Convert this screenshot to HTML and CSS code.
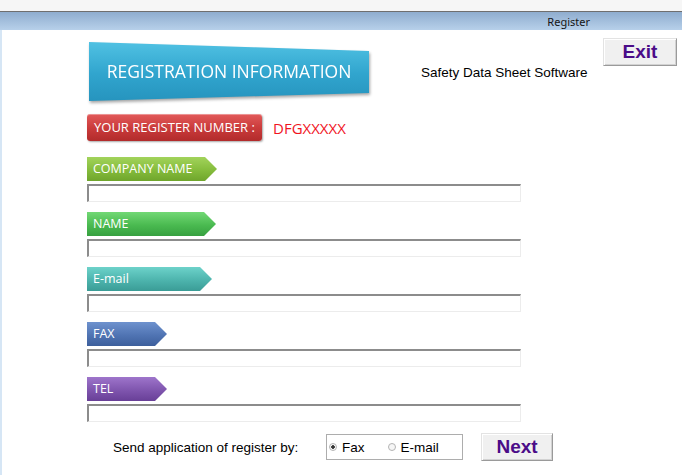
FILE: index.html
```html
<!DOCTYPE html>
<html lang="en">
<head>
  <meta charset="UTF-8">
  <title>Register</title>
  <link rel="stylesheet" href="styles.css">
</head>
<body>
<div class="topStrip"></div>
<header class="titleBar"><span class="titleText">Register</span></header>
<main class="registerForm">
  <div class="headRow">
    <div class="bannerWrap"><div class="banner">REGISTRATION INFORMATION</div></div>
    <p class="tagline">Safety Data Sheet Software</p>
    <button class="winButton exitButton">Exit</button>
  </div>
  <div class="numberRow">
    <div class="numberBadge">YOUR REGISTER NUMBER :</div>
    <span class="numberValue">DFGXXXXX</span>
  </div>
  <div class="fieldList">
    <section class="field">
      <div class="fieldTag tagCompany">COMPANY NAME</div>
      <input class="fieldInput" type="text">
    </section>
    <section class="field">
      <div class="fieldTag tagName">NAME</div>
      <input class="fieldInput" type="text">
    </section>
    <section class="field">
      <div class="fieldTag tagEmail">E-mail</div>
      <input class="fieldInput" type="text">
    </section>
    <section class="field">
      <div class="fieldTag tagFax">FAX</div>
      <input class="fieldInput" type="text">
    </section>
    <section class="field">
      <div class="fieldTag tagTel">TEL</div>
      <input class="fieldInput" type="text">
    </section>
  </div>
  <div class="sendRow">
    <span class="sendLabel">Send application of register by:</span>
    <div class="radioBox">
      <label class="radioOption"><input class="radio" type="radio" name="sendBy" checked>Fax</label>
      <label class="radioOption"><input class="radio" type="radio" name="sendBy">E-mail</label>
    </div>
    <button class="winButton nextButton">Next</button>
  </div>
</main>
</body>
</html>
```

FILE: styles.css
```css
:root {
  --buttonText: #4b0c88;
  --inputLine: #8c8c8c;
}
html, body {
  margin: 0;
  height: 475px;
  overflow: hidden;
  background: #fff;
  font-family: "Liberation Sans", Arial, sans-serif;
}
.topStrip {
  height: 11px;
  background: #f6f6f6;
  border-bottom: 1px solid #6f6f6f;
}
.titleBar {
  height: 18px;
  display: flex;
  justify-content: flex-end;
  align-items: center;
  padding-right: 92px;
  background: linear-gradient(#8fadcf, #b7d0ea);
  font-family: "Noto Sans", sans-serif;
  font-size: 11px;
  color: #151515;
}
.registerForm {
  border-left: 2px solid #d6e6f5;
  padding-left: 85px;
  height: 445px;
  box-sizing: border-box;
}

/* kopfzeile */
.headRow {
  display: flex;
  align-items: flex-start;
  height: 71px;
}
.bannerWrap {
  margin: 10px 0 0 2px;
  filter: drop-shadow(1px 2px 1.5px rgba(0, 0, 0, .35));
}
.banner {
  width: 280px;
  height: 61px;
  display: flex;
  align-items: center;
  justify-content: center;
  clip-path: polygon(0 2px, 100% 11px, 100% 53px, 0 100%);
  background: linear-gradient(#52c3e4, #31a5ce 55%, #2694be);
  color: #fff;
  font-family: "Open Sans", sans-serif;
  font-size: 17.5px;
}
.tagline {
  margin: 35px 0 0 52px;
  font-size: 13.5px;
  line-height: 16px;
  color: #000;
}
.winButton {
  padding: 0;
  box-sizing: border-box;
  background: #f0f0f0;
  border: 1px solid;
  border-color: #e3e3e3 #9a9a9a #9a9a9a #e3e3e3;
  box-shadow: inset 1px 1px 0 #fff, inset -1px -1px 0 #d2d2d2;
  font-family: "Liberation Sans", Arial, sans-serif;
  font-weight: bold;
  font-size: 19px;
  color: var(--buttonText);
}
.exitButton {
  margin: 8px 5px 0 auto;
  width: 74px;
  height: 28px;
}

/* registernummer */
.numberRow {
  margin-top: 13px;
  display: flex;
  align-items: center;
  height: 27px;
}
.numberBadge {
  width: 175px;
  height: 27px;
  line-height: 27px;
  padding-left: 7px;
  box-sizing: border-box;
  border-radius: 3px;
  background: linear-gradient(#e25a5a, #cb3c3c 50%, #b22b2b);
  box-shadow: inset 0 1px 0 rgba(255, 255, 255, .35), 1px 1px 2px rgba(0, 0, 0, .35);
  color: #fff;
  font-family: "Open Sans", sans-serif;
  font-size: 13px;
}
.numberValue {
  margin-left: 11px;
  color: #f0141e;
  font-family: "Open Sans", sans-serif;
  font-size: 15px;
}

/* felder */
.fieldList {
  margin-top: 16px;
  display: flex;
  flex-direction: column;
  gap: 10px;
}
.field {
  display: flex;
  flex-direction: column;
  align-items: flex-start;
  gap: 3px;
}
.fieldTag {
  height: 24px;
  line-height: 24px;
  padding-left: 6px;
  box-sizing: border-box;
  clip-path: polygon(0 0, calc(100% - 12px) 0, 100% 50%, calc(100% - 12px) 100%, 0 100%);
  color: #fff;
  font-family: "Open Sans", sans-serif;
  font-size: 12.5px;
}
.tagCompany { width: 130px; background: linear-gradient(#a2d35b, #85bc3c 55%, #6fa52c); }
.tagName { width: 129px; background: linear-gradient(#72d875, #4aba50 55%, #37a040); }
.tagEmail { width: 125px; background: linear-gradient(#6dd2ca, #4db4ad 55%, #3a9c96); }
.tagFax { width: 80px; background: linear-gradient(#6e92ce, #5074b3 55%, #3d5f9c); }
.tagTel { width: 80px; background: linear-gradient(#9e75cb, #7f55ae 55%, #683f97); }
.fieldInput {
  width: 434px;
  height: 18px;
  margin: 0;
  padding: 0;
  box-sizing: border-box;
  background: #fff;
  border: 1px solid #ececec;
  border-top: 2px solid var(--inputLine);
  border-left: 2px solid var(--inputLine);
  outline: none;
}

/* versand */
.sendRow {
  margin-top: 11px;
  display: flex;
  align-items: center;
  height: 28px;
}
.sendLabel {
  margin-left: 26px;
  width: 213px;
  font-size: 13.5px;
  color: #000;
}
.radioBox {
  width: 137px;
  height: 26px;
  box-sizing: border-box;
  border: 1px solid #adadad;
  display: flex;
  align-items: center;
  padding-left: 2px;
}
.radioOption {
  display: flex;
  align-items: center;
  gap: 5px;
  font-size: 13.5px;
  color: #000;
}
.radioOption + .radioOption {
  margin-left: 23px;
}
.radio {
  appearance: none;
  width: 8px;
  height: 8px;
  margin: 0;
  border: 1px solid #b4b4b4;
  border-radius: 50%;
  background: #f6f6f6;
}
.radio:checked {
  background: radial-gradient(circle, #333 0 1.5px, #f6f6f6 2.1px);
}
.nextButton {
  margin-left: 18px;
  width: 72px;
  height: 28px;
}
```
